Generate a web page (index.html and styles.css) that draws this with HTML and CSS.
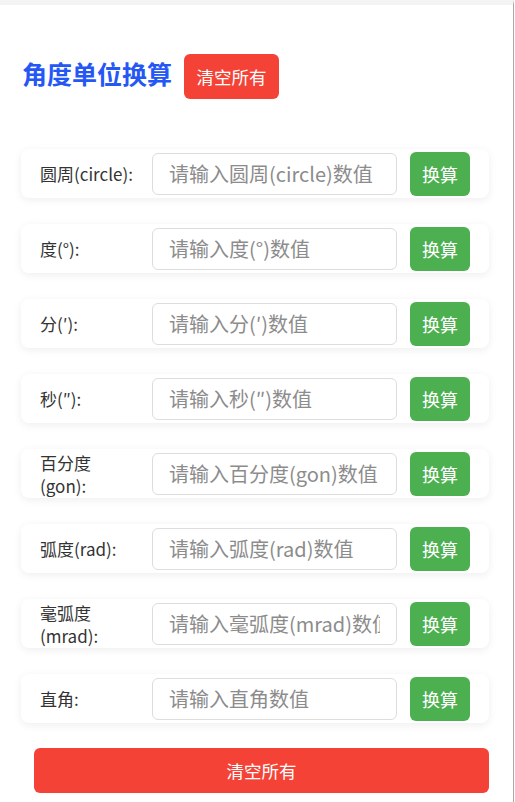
FILE: index.html
```html
<!DOCTYPE html>
<html lang="zh-CN">
<head>
<meta charset="utf-8">
<title>角度单位换算</title>
<link rel="stylesheet" href="styles.css">
</head>
<body>
<div class="frame">
  <div class="app">
    <div class="header">
      <h1 class="title">角度单位换算</h1>
      <button class="btn btn-clear btn-head">清空所有</button>
    </div>

    <div class="list">
      <div class="row">
        <label class="label">圆周(circle):</label>
        <input class="field" type="text" placeholder="请输入圆周(circle)数值">
        <button class="btn btn-go">换算</button>
      </div>
      <div class="row">
        <label class="label">度(°):</label>
        <input class="field" type="text" placeholder="请输入度(°)数值">
        <button class="btn btn-go">换算</button>
      </div>
      <div class="row">
        <label class="label">分(′):</label>
        <input class="field" type="text" placeholder="请输入分(′)数值">
        <button class="btn btn-go">换算</button>
      </div>
      <div class="row">
        <label class="label">秒(″):</label>
        <input class="field" type="text" placeholder="请输入秒(″)数值">
        <button class="btn btn-go">换算</button>
      </div>
      <div class="row">
        <label class="label">百分度(gon):</label>
        <input class="field" type="text" placeholder="请输入百分度(gon)数值">
        <button class="btn btn-go">换算</button>
      </div>
      <div class="row">
        <label class="label">弧度(rad):</label>
        <input class="field" type="text" placeholder="请输入弧度(rad)数值">
        <button class="btn btn-go">换算</button>
      </div>
      <div class="row">
        <label class="label">毫弧度(mrad):</label>
        <input class="field" type="text" placeholder="请输入毫弧度(mrad)数值">
        <button class="btn btn-go">换算</button>
      </div>
      <div class="row">
        <label class="label">直角:</label>
        <input class="field" type="text" placeholder="请输入直角数值">
        <button class="btn btn-go">换算</button>
      </div>
    </div>

    <button class="btn btn-clear btn-wide">清空所有</button>
  </div>
</div>
</body>
</html>
```

FILE: styles.css
```css
* {
  box-sizing: border-box;
}

html,
body {
  margin: 0;
  padding: 0;
  background: #ffffff;
}

body {
  font-family: "Noto Sans CJK SC", "Noto Sans", sans-serif;
  color: #333333;
}

.frame {
  width: 514px;
  min-height: 802px;
  border-top: 5px solid #f4f4f4;
  border-right: 1px solid #a8a8a8;
}

.app {
  padding: 49px 24px 0 21px;
}

.header {
  display: flex;
  align-items: baseline;
  gap: 12px;
  height: 45px;
  padding-left: 1px;
}

.title {
  margin: 0;
  font-size: 25px;
  font-weight: 700;
  color: #2457f4;
  line-height: 1.2;
}

.btn {
  border: none;
  font-family: "Noto Sans CJK SC", "Noto Sans", sans-serif;
  color: #ffffff;
  cursor: pointer;
  border-radius: 6px;
}

.btn-clear {
  background: #f44336;
  font-size: 17.5px;
  height: 45px;
  padding: 0;
}

.btn-head {
  width: 95px;
}

.list {
  display: flex;
  flex-direction: column;
  gap: 26px;
  margin-top: 50px;
}

.row {
  display: flex;
  align-items: center;
  height: 49px;
  padding: 0 19px;
  background: #ffffff;
  border-radius: 8px;
  box-shadow: 0 2px 8px rgba(0, 0, 0, 0.07);
}

.label {
  flex: none;
  width: 95px;
  margin-right: 17px;
  font-size: 17px;
  line-height: 23px;
  color: #333333;
}

.field {
  flex: none;
  width: 245px;
  height: 42px;
  margin-right: 13px;
  padding: 0 16px;
  border: 1px solid #dddddd;
  border-radius: 6px;
  font-family: "Noto Sans CJK SC", "Noto Sans", sans-serif;
  font-size: 20px;
  color: #333333;
  background: #ffffff;
  outline: none;
}

.field::placeholder {
  color: #8c8c8c;
}

.btn-go {
  flex: none;
  width: 60px;
  height: 44px;
  padding: 0;
  background: #4caf50;
  font-size: 18px;
}

.btn-wide {
  display: block;
  width: 455px;
  margin: 25px 0 0 13px;
}
```
